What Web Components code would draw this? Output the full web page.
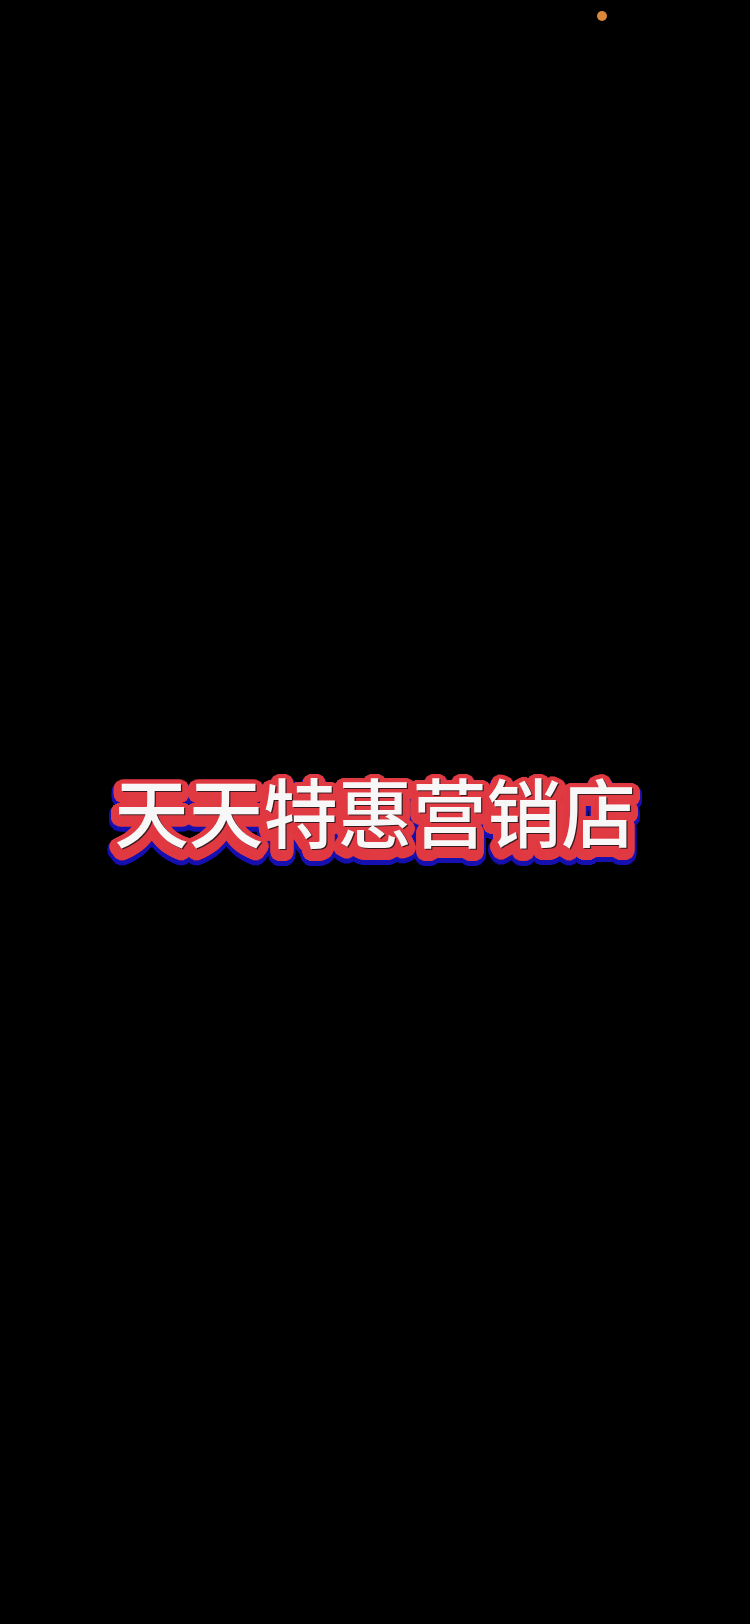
<!DOCTYPE html>
<html lang="zh-CN">
<head>
<meta charset="utf-8">
<style>
html,body{margin:0;padding:0;background:#000;height:100%;overflow:hidden}
</style>
</head>
<body>
<splash-screen>
  <status-dot slot="overlay"></status-dot>
  <promo-title>天天特惠营销店</promo-title>
</splash-screen>
<script>
function ring(r,dx,dy,color,blur){
  const out=[];
  for(let i=0;i<48;i++){
    const a=i/48*Math.PI*2;
    out.push(`${(Math.cos(a)*r+dx).toFixed(2)}px ${(Math.sin(a)*r+dy).toFixed(2)}px ${blur}px ${color}`);
  }
  return out;
}
class SplashScreen extends HTMLElement{
  constructor(){
    super();
    this.attachShadow({mode:'open'}).innerHTML=`<style>
      :host{display:flex;box-sizing:border-box;position:relative;width:750px;height:1624px;padding-bottom:4px;background:#000;align-items:center;justify-content:center;overflow:hidden}
    </style><slot name="overlay"></slot><slot></slot>`;
  }
}
class StatusDot extends HTMLElement{
  constructor(){
    super();
    this.attachShadow({mode:'open'}).innerHTML=`<style>
      :host{display:block;position:absolute;left:597px;top:11px;width:10px;height:10px;border-radius:50%;background:#d9873a;filter:blur(.4px)}
    </style>`;
  }
}
class PromoTitle extends HTMLElement{
  constructor(){
    super();
    const red='#e03a42',blue='#1710b0';
    const shadows=[
      '1.2px 1.2px .6px #3a1a1e',
      ...ring(3,0,1,red,0.5),
      ...ring(4,0,4,red,0.5),
      ...ring(8,0,4,red,0.6),
      ...ring(5,0,7,blue,0.6),
      ...ring(10,0,7,blue,0.6)
    ].join(',');
    this.attachShadow({mode:'open'}).innerHTML=`<style>
      :host{display:block;font:500 74.5px/1 "Noto Sans CJK SC","Noto Sans CJK JP",sans-serif;color:#f8f7f7;white-space:nowrap}
      span{display:block;text-shadow:${shadows};filter:blur(.35px)}
    </style><span><slot></slot></span>`;
  }
}
customElements.define('splash-screen',SplashScreen);
customElements.define('status-dot',StatusDot);
customElements.define('promo-title',PromoTitle);
</script>
</body>
</html>
